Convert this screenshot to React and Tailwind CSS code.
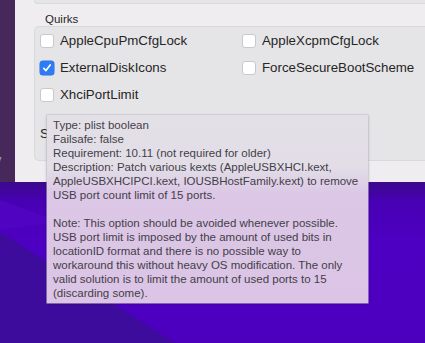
import { useState } from 'react'

const quirks = [
  ['AppleCpuPmCfgLock', false],
  ['AppleXcpmCfgLock', false],
  ['ExternalDiskIcons', true],
  ['ForceSecureBootScheme', false],
  ['XhciPortLimit', false],
]

const tipLines = [
  'Type: plist boolean',
  'Failsafe: false',
  'Requirement: 10.11 (not required for older)',
  'Description: Patch various kexts (AppleUSBXHCI.kext,',
  'AppleUSBXHCIPCI.kext, IOUSBHostFamily.kext) to remove',
  'USB port count limit of 15 ports.',
  '',
  'Note: This option should be avoided whenever possible.',
  'USB port limit is imposed by the amount of used bits in',
  'locationID format and there is no possible way to',
  'workaround this without heavy OS modification. The only',
  'valid solution is to limit the amount of used ports to 15',
  '(discarding some).',
]

function Checkbox({ checked, onChange }) {
  return (
    <button
      onClick={onChange}
      className={
        checked
          ? 'flex h-[14px] w-[14px] shrink-0 items-center justify-center rounded-[3px] bg-[#2f7bf5] shadow-[0_0_0_0.5px_#2a6fe0]'
          : 'h-[14px] w-[14px] shrink-0 rounded-[3px] border border-[#c9c8ca] bg-white'
      }
    >
      {checked && (
        <svg width="10" height="10" viewBox="0 0 10 10" fill="none">
          <path d="M1.8 5.3 L4 7.6 L8.2 2" stroke="white" strokeWidth="1.7" strokeLinecap="round" strokeLinejoin="round" />
        </svg>
      )}
    </button>
  )
}

export default function App() {
  const [values, setValues] = useState(quirks.map((q) => q[1]))

  const toggle = (i) => setValues((prev) => prev.map((v, j) => (j === i ? !v : v)))

  return (
    <div className="relative flex h-[343px] w-[425px] flex-col overflow-hidden bg-[#4b00bc] font-['Liberation_Sans',Arial,sans-serif]">
      {/* window */}
      <div className="flex h-[182px] shrink-0">
        <div className="relative w-[15px] shrink-0 overflow-hidden bg-[#47285a]">
          <span className="absolute left-[-6px] top-[151px] text-[15px] leading-[18px] text-[#a393b3]">y</span>
        </div>
        <div className="flex flex-1 flex-col bg-[#efedf0]">
          <div className="ml-[19px] h-[4px] rounded-bl-[5px] border-b border-l border-[#d9d8da] bg-[#e5e4e6]" />
          <div className="ml-[30px] mt-[8px] text-[11.5px] leading-[14px] text-[#262626]">Quirks</div>
          <div className="ml-[19px] h-[135px] rounded-l-[5px] border-y border-l border-[#d9d8da] bg-[#e5e4e6] pl-[5px]">
            <div className="grid grid-cols-[202px_1fr]">
              {quirks.map(([name], i) => (
                <label key={name} className="flex h-[27px] items-center gap-[6px] text-[13.3px] text-[#262626]">
                  <Checkbox checked={values[i]} onChange={() => toggle(i)} />
                  <span>{name}</span>
                </label>
              ))}
            </div>
            <div className="mt-[12px] flex h-[27px] items-center text-[13.3px] text-[#262626]">SetApfsTrimTimeout</div>
          </div>
        </div>
      </div>

      {/* wallpaper */}
      <div className="relative flex-1 bg-[linear-gradient(180deg,#3c0a8c_0%,#4800b4_12%,#4e00c2_40%,#4c00be_100%)]">
        <svg className="absolute inset-0" width="425" height="161" viewBox="0 0 425 161">
          <polygon points="0,18 60,40 0,48" fill="#5608c9" opacity="0.5" />
          <polygon points="0,50 175,161 0,161" fill="#3e0c9c" />
        </svg>
      </div>

      {/* tooltip */}
      <div className="absolute left-[47px] top-[115px] h-[188px] w-[321px] bg-[linear-gradient(180deg,#e3e0e7_0%,#e2dde7_28%,#dcc7e6_42%,#dbc4e5_100%)] px-[6px] pt-[3px] text-[11.5px] leading-[14px] text-[#433e48] shadow-[0_1px_3px_rgba(0,0,0,0.25)] ring-[0.5px] ring-[#c9c2cf]">
        {tipLines.map((line, i) => (
          <div key={i} className="h-[14px] whitespace-pre">{line}</div>
        ))}
      </div>
    </div>
  )
}
